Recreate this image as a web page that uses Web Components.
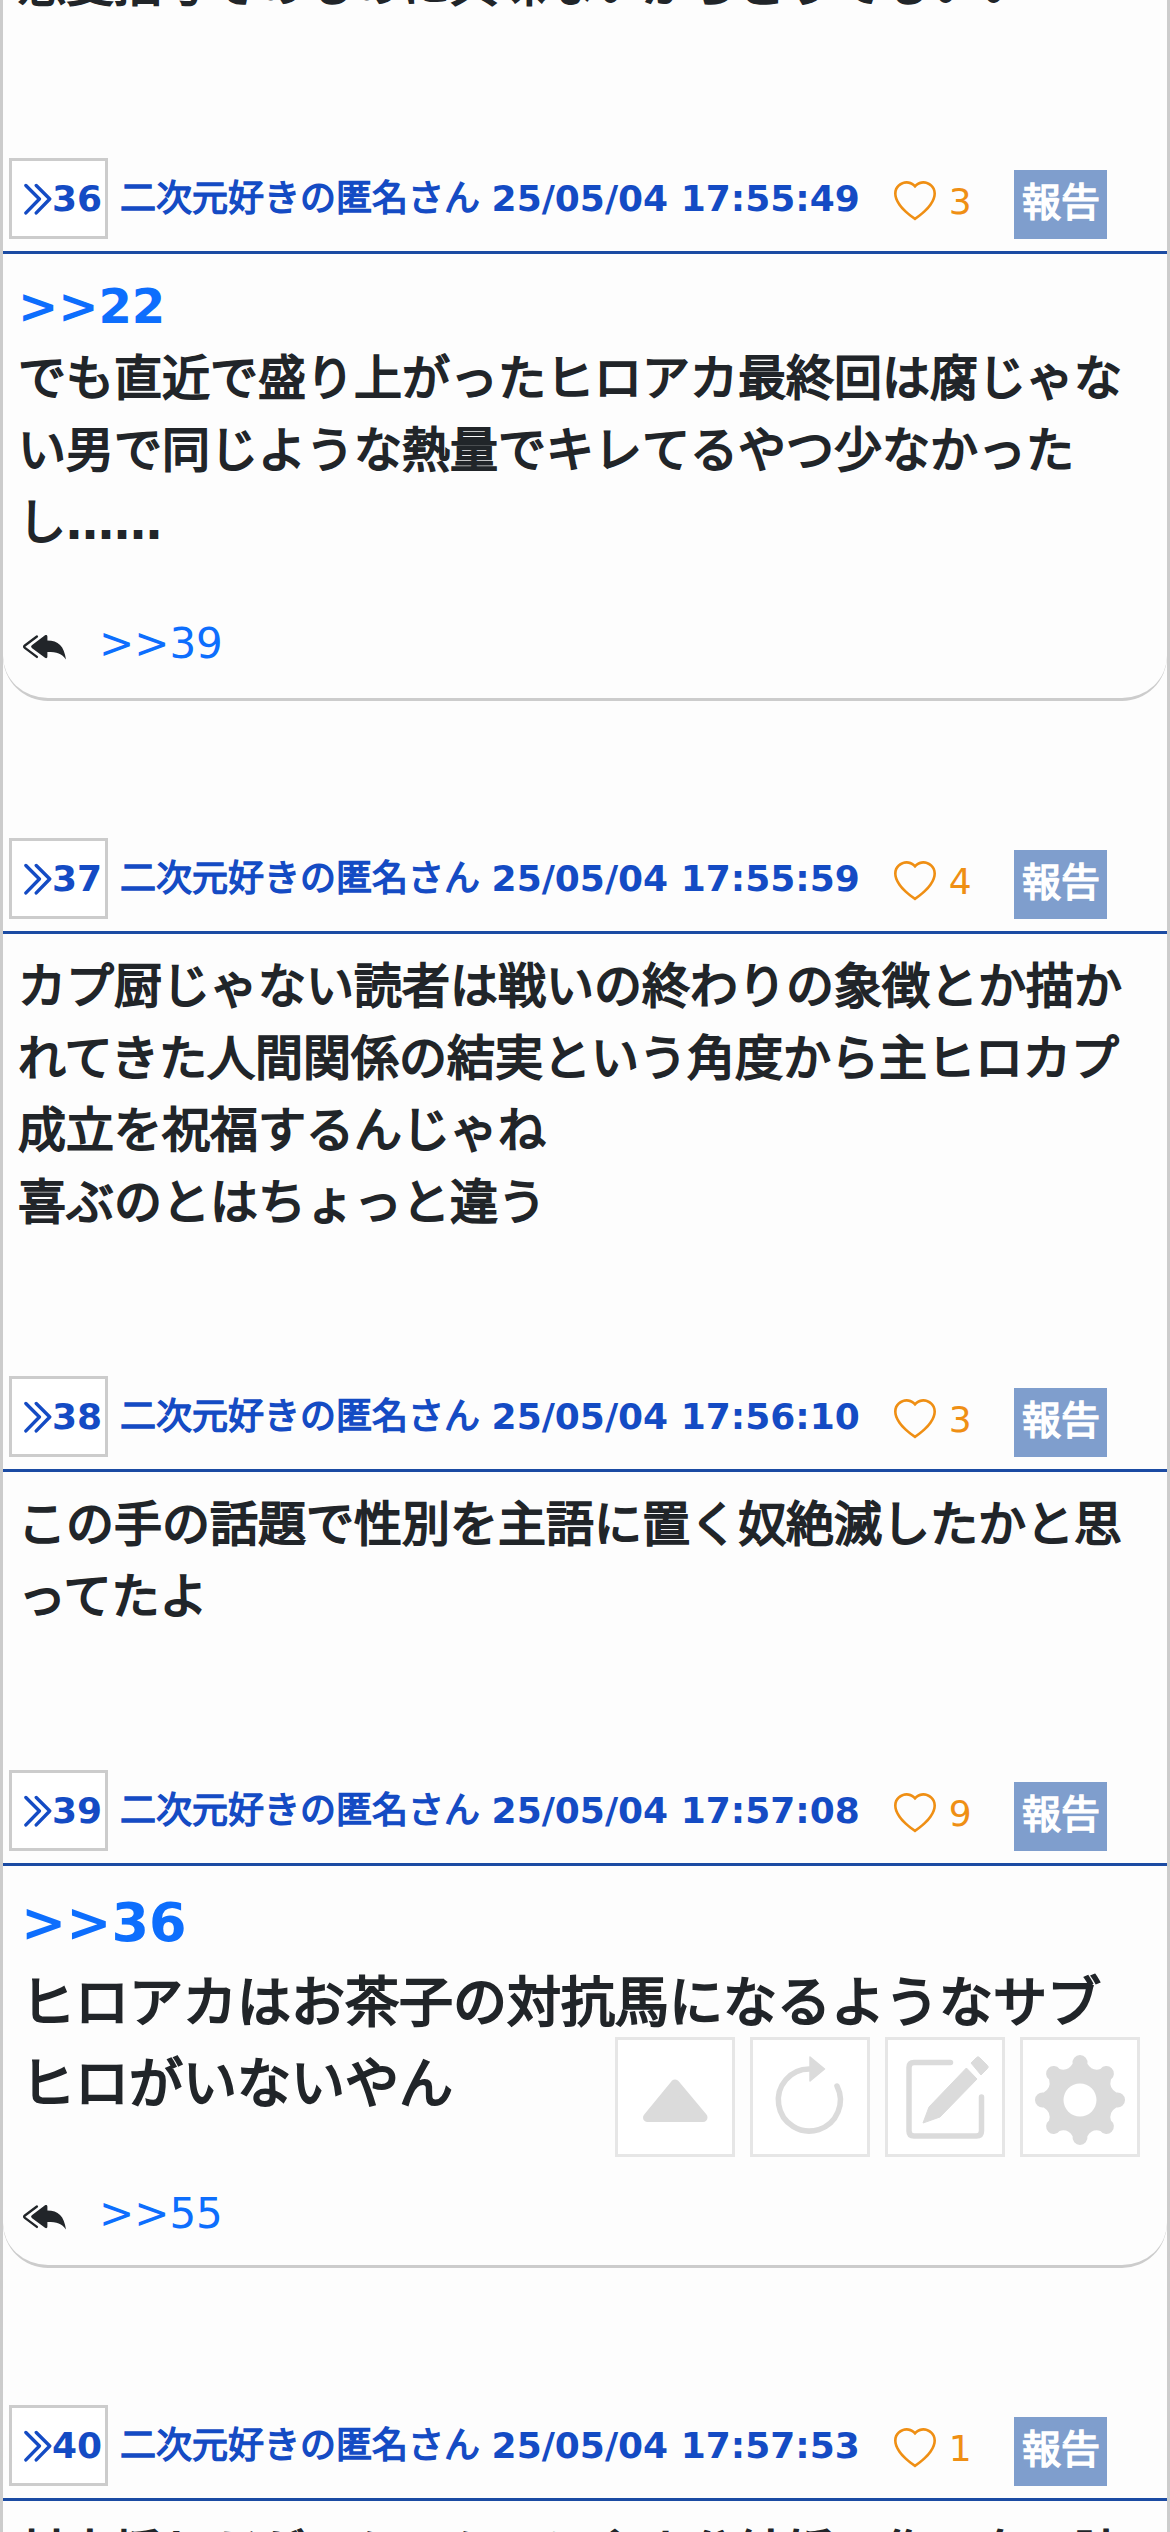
<!DOCTYPE html>
<html lang="ja">
<head>
<meta charset="utf-8">
<meta name="viewport" content="width=device-width, initial-scale=1">
<title>スレッド</title>
<style>
  html { height: 100%; }
  body {
    margin: 0;
    height: 100%;
    overflow: hidden;
    background: #fdfdfd;
    color: #212529;
    font-family: "DejaVu Sans", "Noto Sans CJK JP", sans-serif;
  }
  b { -webkit-text-stroke: 0; }
</style>
</head>
<body>
<thread-view>
  <thread-post number="35" name="二次元好きの匿名さん" date="25/05/04 17:55:30" likes="2">恋愛描写そのものに興味ないからどうでもいい</thread-post>
  <thread-post number="36" name="二次元好きの匿名さん" date="25/05/04 17:55:49" likes="3" quote="22" reply="39">でも直近で盛り上がったヒロアカ最終回は腐じゃない男で同じような熱量でキレてるやつ少なかったし<b>……</b></thread-post>
  <thread-post number="37" name="二次元好きの匿名さん" date="25/05/04 17:55:59" likes="4">カプ厨じゃない読者は戦いの終わりの象徴とか描かれてきた人間関係の結実という角度から主ヒロカプ成立を祝福するんじゃね<br>喜ぶのとはちょっと違う</thread-post>
  <thread-post number="38" name="二次元好きの匿名さん" date="25/05/04 17:56:10" likes="3">この手の話題で性別を主語に置く奴絶滅したかと思ってたよ</thread-post>
  <thread-post large number="39" name="二次元好きの匿名さん" date="25/05/04 17:57:08" likes="9" quote="36" reply="55">ヒロアカはお茶子の対抗馬になるようなサブヒロがいないやん</thread-post>
  <thread-post number="40" name="二次元好きの匿名さん" date="25/05/04 17:57:53" likes="1">対立煽りだがこういうのは主人公結婚の作る女の読</thread-post>
  <thread-toolbar slot="toolbar"></thread-toolbar>
</thread-view>

<template id="view-template">
  <style>
    :host { display: block; height: 100%; overflow: hidden; box-sizing: border-box; border: solid #ccc; border-width: 0 3px; }
    .posts { display: flex; flex-direction: column; justify-content: flex-start; gap: 137px; margin-top: -164px; }
    .tools { position: fixed; right: 30px; bottom: 375px; }
  </style>
  <main class="posts"><slot></slot></main>
  <div class="tools"><slot name="toolbar"></slot></div>
</template>

<template id="post-template">
  <style>
    :host { display: block; }
    header {
      display: flex; align-items: flex-end; box-sizing: border-box; height: 96px;
      padding: 0 60px 12px 6px; border-bottom: 3px solid #1b4ba3;
      font-size: 36px; line-height: 75px; white-space: nowrap;
    }
    .number {
      display: flex; align-items: center; box-sizing: border-box; height: 81px; padding: 0 3px 0 4px;
      border: 3px solid #ccc; background: #fff;
      color: #144bc4; font-weight: bold; text-decoration: none;
    }
    .number svg { width: 36px; height: 36px; }
    .meta { margin-left: 12px; padding: 3px 0; color: #144bc4; }
    .name, .report, .text { font-weight: normal; -webkit-text-stroke: 0.04em currentColor; }
    .date { font-weight: bold; }
    .like {
      display: flex; align-items: center; gap: 13px; height: 75px; margin-left: 34px; padding: 0;
      border: 0; background: none; color: #ef8f14; font: inherit;
    }
    .like svg { width: 42px; height: 42px; }
    .report {
      height: 69px; margin-left: auto; padding: 0 7px 3px 8px; border: 0;
      background: #7f9ecd; color: #fff; font-family: inherit; font-size: 39px; line-height: 66px;
    }
    .body { border: 0 solid #ccc; font-size: 48px; line-height: 72px; padding: 16px 15px 1px; }
    :host([large]) .body { font-size: 54px; line-height: 81px; padding-left: 18px; padding-right: 18px; }
    :host([reply]) .body { border-bottom-width: 3px; border-radius: 0 0 45px 45px; padding-bottom: 23px; }
    :host([reply][large]) .body { padding-bottom: 20px; }
    .text { margin: 0; overflow-wrap: anywhere; }
    .quote { display: block; font-weight: bold; -webkit-text-stroke: 0; }
    a { color: #0d6efd; text-decoration: none; }
    .replies { display: flex; align-items: center; gap: 27px; margin-top: 54px; font-size: 42px; line-height: 63px; }
    :host([large]) .replies { margin: 57px 0 0 -3px; }
    .replies svg { width: 48px; height: 48px; margin: 6px 3px 0 3px; }
    [hidden] { display: none; }
  </style>
  <article>
    <header>
      <a class="number" href="#"><svg viewBox="0 0 16 16" fill="none" stroke="currentColor" stroke-width="1.5" stroke-linecap="round" stroke-linejoin="round" aria-hidden="true"><path d="M4.4 2 10.4 8 4.4 14.2M9 2 15 8 9 14.2"/></svg><span class="n"></span></a>
      <span class="meta"><span class="name"></span> <span class="date"></span></span>
      <button class="like" type="button" aria-label="いいね"><svg viewBox="0 0 16 16" fill="currentColor" aria-hidden="true"><path d="m8 2.748-.717-.737C5.6.281 2.514.878 1.4 3.053c-.523 1.023-.641 2.5.314 4.385.92 1.815 2.834 3.989 6.286 6.357 3.452-2.368 5.365-4.542 6.286-6.357.955-1.886.838-3.362.314-4.385C13.486.878 10.4.28 8.717 2.01L8 2.748zM8 15C-7.333 4.868 3.279-3.04 7.824 1.143c.06.055.119.112.176.171a3.12 3.12 0 0 1 .176-.17C12.72-3.042 23.333 4.867 8 15z"/></svg><span class="count"></span></button>
      <button class="report" type="button">報告</button>
    </header>
    <div class="body">
      <p class="text"><a class="quote" href="#" hidden></a><slot></slot></p>
      <div class="replies" hidden>
        <svg viewBox="0 0 16 16" aria-hidden="true"><path fill="#212529" d="M3.6 8.3a.6.6 0 0 1 0-.9L8 4.1c.4-.3.8-.1.8.4v1.3c3.6 0 5.6 1.8 6.2 6.4-1.4-2-3-2.5-6.2-2.5v1.5c0 .5-.4.7-.8.4z"/><path d="M5.3 4.5 1.3 7.5q-.5.4 0 .8l4 3" fill="none" stroke="#212529" stroke-width=".8" stroke-linecap="round"/></svg>
        <a class="reply" href="#"></a>
      </div>
    </div>
  </article>
</template>

<template id="toolbar-template">
  <style>
    :host { display: flex; gap: 15px; }
    button { display: flex; align-items: center; justify-content: center; box-sizing: border-box; width: 120px; height: 120px; padding: 0; border: 3px solid #e6e6e6; background: #fff; color: #dbdbdb; }
    svg { width: 114px; height: 114px; }
  </style>
  <button type="button" aria-label="上へ"><svg viewBox="0 0 114 114"><path d="M57 44 29.500 77.500H85Z" fill="currentColor" stroke="currentColor" stroke-width="9" stroke-linejoin="round"/></svg></button>
  <button type="button" aria-label="更新"><svg viewBox="0 0 114 114"><path d="M56.500 29A31 31 0 1 0 84 46" fill="none" stroke="currentColor" stroke-width="5.500" stroke-linecap="round"/><path d="M57 17V41L71.500 29Z" fill="currentColor" stroke="currentColor" stroke-width="1.500" stroke-linejoin="round"/></svg></button>
  <button type="button" aria-label="書き込む"><svg viewBox="0 0 114 114"><path d="M62.500 22.500H26q-5 0-5 5V91q0 5 5 5H88.500q5 0 5-5V57" fill="none" stroke="currentColor" stroke-width="5.500" stroke-linecap="round"/><path d="M78.400 28 89 39 52 77 35 83 41 67ZM83 23l5.500-5.500q1.500-1.500 3 0l8 8q1.500 1.500 0 3L93 35Z" fill="currentColor" stroke="currentColor" stroke-width="1" stroke-linejoin="round"/></svg></button>
  <button type="button" aria-label="設定"><svg viewBox="0 0 114 114"><path id="gear" fill="currentColor" fill-rule="evenodd"/></svg></button>
</template>

<script>
  const stamp = (host, id) => {
    const root = host.attachShadow({ mode: "open" });
    root.append(document.getElementById(id).content.cloneNode(true));
    return root;
  };

  class ThreadView extends HTMLElement {
    constructor() { super(); stamp(this, "view-template"); }
  }

  class ThreadPost extends HTMLElement {
    constructor() { super(); stamp(this, "post-template"); }
    connectedCallback() {
      const $ = (s) => this.shadowRoot.querySelector(s);
      const get = (n) => this.getAttribute(n);
      $(".n").textContent = get("number");
      $(".name").textContent = get("name");
      $(".date").textContent = get("date");
      $(".count").textContent = get("likes");
      if (this.hasAttribute("quote")) {
        $(".quote").textContent = ">>" + get("quote");
        $(".quote").hidden = false;
      }
      if (this.hasAttribute("reply")) {
        $(".reply").textContent = ">>" + get("reply");
        $(".replies").hidden = false;
      }
    }
  }

  class ThreadToolbar extends HTMLElement {
    constructor() {
      super();
      const root = stamp(this, "toolbar-template");
      // Eight round teeth joined by inward curves, with a hole in the middle.
      const at = (deg, r) => {
        const a = (deg - 90) * Math.PI / 180;
        return (57 + r * Math.cos(a)).toFixed(1) + " " + (60 + r * Math.sin(a)).toFixed(1);
      };
      let d = "M" + at(-11.5, 37);
      for (let i = 0; i < 8; i++) {
        const c = i * 45;
        d += "A7.5 7.5 0 1 1 " + at(c + 11.5, 37) + "Q" + at(c + 22.5, 31) + " " + at(c + 33.5, 37);
      }
      d += "ZM40.500 60a16.500 16.500 0 1 0 33 0a16.500 16.500 0 1 0-33 0Z";
      root.getElementById("gear").setAttribute("d", d);
    }
  }

  customElements.define("thread-post", ThreadPost);
  customElements.define("thread-toolbar", ThreadToolbar);
  customElements.define("thread-view", ThreadView);
</script>
</body>
</html>
